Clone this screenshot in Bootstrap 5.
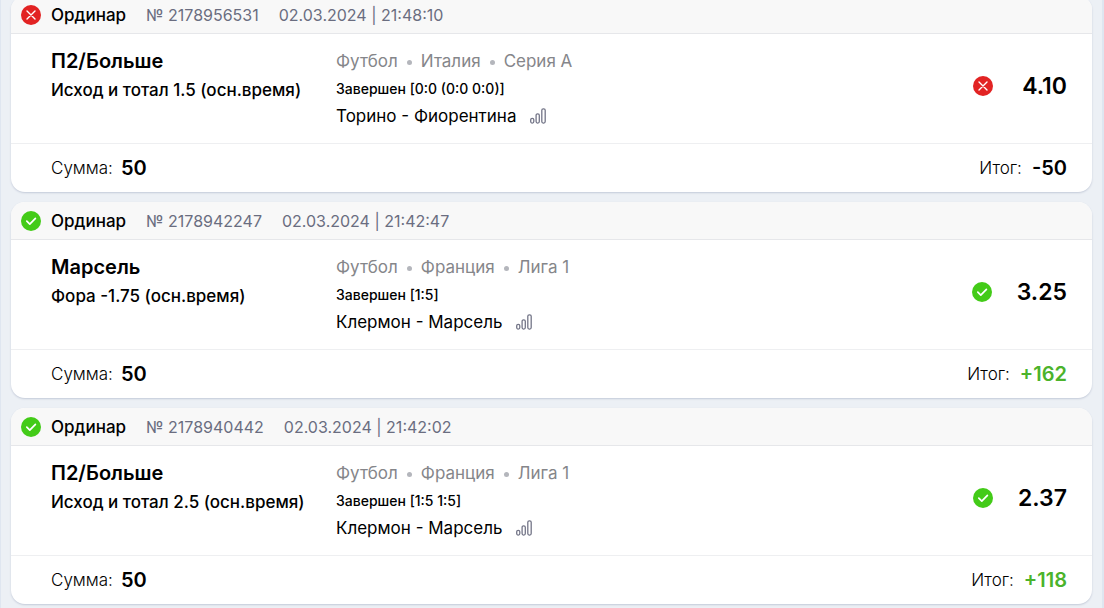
<!DOCTYPE html>
<html lang="ru">
<head>
<meta charset="utf-8">
<meta name="viewport" content="width=device-width, initial-scale=1">
<title>История ставок</title>
<link href="https://cdn.jsdelivr.net/npm/bootstrap@5.3.0/dist/css/bootstrap.min.css" rel="stylesheet">
<script src="https://cdn.jsdelivr.net/npm/bootstrap@5.3.0/dist/js/bootstrap.bundle.min.js" defer></script>
<style>
  body { background: #ecf0f5; color: #000; font-family: Inter, "Liberation Sans", sans-serif; font-size: 17px; line-height: 24px; }
  .history { border: solid #dfe6f0; border-width: 0 2px 0 1px; padding: 0 10px 4px; margin-top: -4px; gap: 10px; }
  .bet { border: 0; border-radius: 14px; box-shadow: 0 1px 2px #c3cad8; overflow: hidden; }
  .bet-head { background: #f8f8f8; border-bottom: 1px solid #e6e7ea; padding: 7px 10px 6px; gap: 20px; }
  .bet-kind { font-weight: 500; gap: 10px; }
  .bet-meta { font-size: 16px; color: #6a6d80; }
  .bet-body { padding: 15px 25px 15px 40px; border-bottom: 1px solid #eeeff1; }
  .bet-pick { width: 285px; }
  .pick-name { font-size: 20px; font-weight: 600; line-height: 24px; }
  .pick-type { font-weight: 500; line-height: 34px; }
  .league { color: #85868a; }
  .dot { width: 5px; height: 5px; background: #b4b6bc; margin: 3px 9px 0; }
  .status { font-size: 14px; font-weight: 500; line-height: 31px; }
  .teams { gap: 14px; }
  .stats-btn { line-height: 0; color: #747688; }
  .bet-odds { gap: 25px; padding-bottom: 6px; }
  .odds-value { font-size: 23px; font-weight: 600; line-height: 32px; min-width: 49px; }
  .bet-foot { padding: 12px 25px 12px 40px; }
  .foot-total { gap: 10px; }
  .foot-label { font-weight: 300; }
  .foot-value { font-size: 20px; font-weight: 600; }
  .win { color: #4bb32b; }
</style>
</head>
<body>
<svg class="d-none" aria-hidden="true">
  <symbol id="lost" viewBox="0 0 20 20"><circle cx="10" cy="10" r="10" fill="#e22323"/><path d="M6 6l8 8M14 6l-8 8" stroke="#fff" stroke-width="1.4" stroke-linecap="round"/></symbol>
  <symbol id="won" viewBox="0 0 20 20"><circle cx="10" cy="10" r="10" fill="#43cb18"/><path d="M5.8 10.2l3 3 5.6-5.8" fill="none" stroke="#fff" stroke-width="1.7" stroke-linecap="round" stroke-linejoin="round"/></symbol>
  <symbol id="stats" viewBox="0 0 16 16"><g fill="none" stroke="currentColor" stroke-width="1.3"><rect x="0.7" y="10.3" width="3.1" height="4.8" rx="1.5"/><rect x="6.1" y="5.8" width="3.2" height="9.3" rx="1.5"/><rect x="11.8" y="0.8" width="3.4" height="14.3" rx="1.5"/></g></symbol>
</svg>
<main class="history d-flex flex-column">
  <article class="card bet">
    <header class="bet-head d-flex align-items-center">
      <span class="bet-kind d-flex align-items-center"><svg width="20" height="20"><use href="#lost"/></svg>Ординар</span>
      <span class="bet-meta">№ 2178956531</span>
      <time class="bet-meta">02.03.2024 | 21:48:10</time>
    </header>
    <div class="bet-body d-flex">
      <div class="bet-pick flex-shrink-0">
        <div class="pick-name">П2/Больше</div>
        <div class="pick-type">Исход и тотал 1.5 (осн.время)</div>
      </div>
      <div class="flex-grow-1">
        <div class="league d-flex align-items-center"><span>Футбол</span><i class="dot rounded-circle"></i><span>Италия</span><i class="dot rounded-circle"></i><span>Серия A</span></div>
        <div class="status">Завершен [0:0 (0:0 0:0)]</div>
        <div class="teams d-flex align-items-center"><span>Торино - Фиорентина</span><button class="stats-btn btn border-0 p-0" type="button" aria-label="Статистика"><svg width="16" height="16"><use href="#stats"/></svg></button></div>
      </div>
      <div class="bet-odds d-flex align-items-center"><svg width="20" height="20"><use href="#lost"/></svg><span class="odds-value text-end">4.10</span></div>
    </div>
    <footer class="bet-foot d-flex align-items-center justify-content-between">
      <div class="d-flex gap-2"><span class="foot-label">Сумма:</span><span class="foot-value">50</span></div>
      <div class="foot-total d-flex"><span class="foot-label">Итог:</span><span class="foot-value">-50</span></div>
    </footer>
  </article>

  <article class="card bet">
    <header class="bet-head d-flex align-items-center">
      <span class="bet-kind d-flex align-items-center"><svg width="20" height="20"><use href="#won"/></svg>Ординар</span>
      <span class="bet-meta">№ 2178942247</span>
      <time class="bet-meta">02.03.2024 | 21:42:47</time>
    </header>
    <div class="bet-body d-flex">
      <div class="bet-pick flex-shrink-0">
        <div class="pick-name">Марсель</div>
        <div class="pick-type">Фора -1.75 (осн.время)</div>
      </div>
      <div class="flex-grow-1">
        <div class="league d-flex align-items-center"><span>Футбол</span><i class="dot rounded-circle"></i><span>Франция</span><i class="dot rounded-circle"></i><span>Лига 1</span></div>
        <div class="status">Завершен [1:5]</div>
        <div class="teams d-flex align-items-center"><span>Клермон - Марсель</span><button class="stats-btn btn border-0 p-0" type="button" aria-label="Статистика"><svg width="16" height="16"><use href="#stats"/></svg></button></div>
      </div>
      <div class="bet-odds d-flex align-items-center"><svg width="20" height="20"><use href="#won"/></svg><span class="odds-value text-end">3.25</span></div>
    </div>
    <footer class="bet-foot d-flex align-items-center justify-content-between">
      <div class="d-flex gap-2"><span class="foot-label">Сумма:</span><span class="foot-value">50</span></div>
      <div class="foot-total d-flex"><span class="foot-label">Итог:</span><span class="foot-value win">+162</span></div>
    </footer>
  </article>

  <article class="card bet">
    <header class="bet-head d-flex align-items-center">
      <span class="bet-kind d-flex align-items-center"><svg width="20" height="20"><use href="#won"/></svg>Ординар</span>
      <span class="bet-meta">№ 2178940442</span>
      <time class="bet-meta">02.03.2024 | 21:42:02</time>
    </header>
    <div class="bet-body d-flex">
      <div class="bet-pick flex-shrink-0">
        <div class="pick-name">П2/Больше</div>
        <div class="pick-type">Исход и тотал 2.5 (осн.время)</div>
      </div>
      <div class="flex-grow-1">
        <div class="league d-flex align-items-center"><span>Футбол</span><i class="dot rounded-circle"></i><span>Франция</span><i class="dot rounded-circle"></i><span>Лига 1</span></div>
        <div class="status">Завершен [1:5 1:5]</div>
        <div class="teams d-flex align-items-center"><span>Клермон - Марсель</span><button class="stats-btn btn border-0 p-0" type="button" aria-label="Статистика"><svg width="16" height="16"><use href="#stats"/></svg></button></div>
      </div>
      <div class="bet-odds d-flex align-items-center"><svg width="20" height="20"><use href="#won"/></svg><span class="odds-value text-end">2.37</span></div>
    </div>
    <footer class="bet-foot d-flex align-items-center justify-content-between">
      <div class="d-flex gap-2"><span class="foot-label">Сумма:</span><span class="foot-value">50</span></div>
      <div class="foot-total d-flex"><span class="foot-label">Итог:</span><span class="foot-value win">+118</span></div>
    </footer>
  </article>
</main>
</body>
</html>
